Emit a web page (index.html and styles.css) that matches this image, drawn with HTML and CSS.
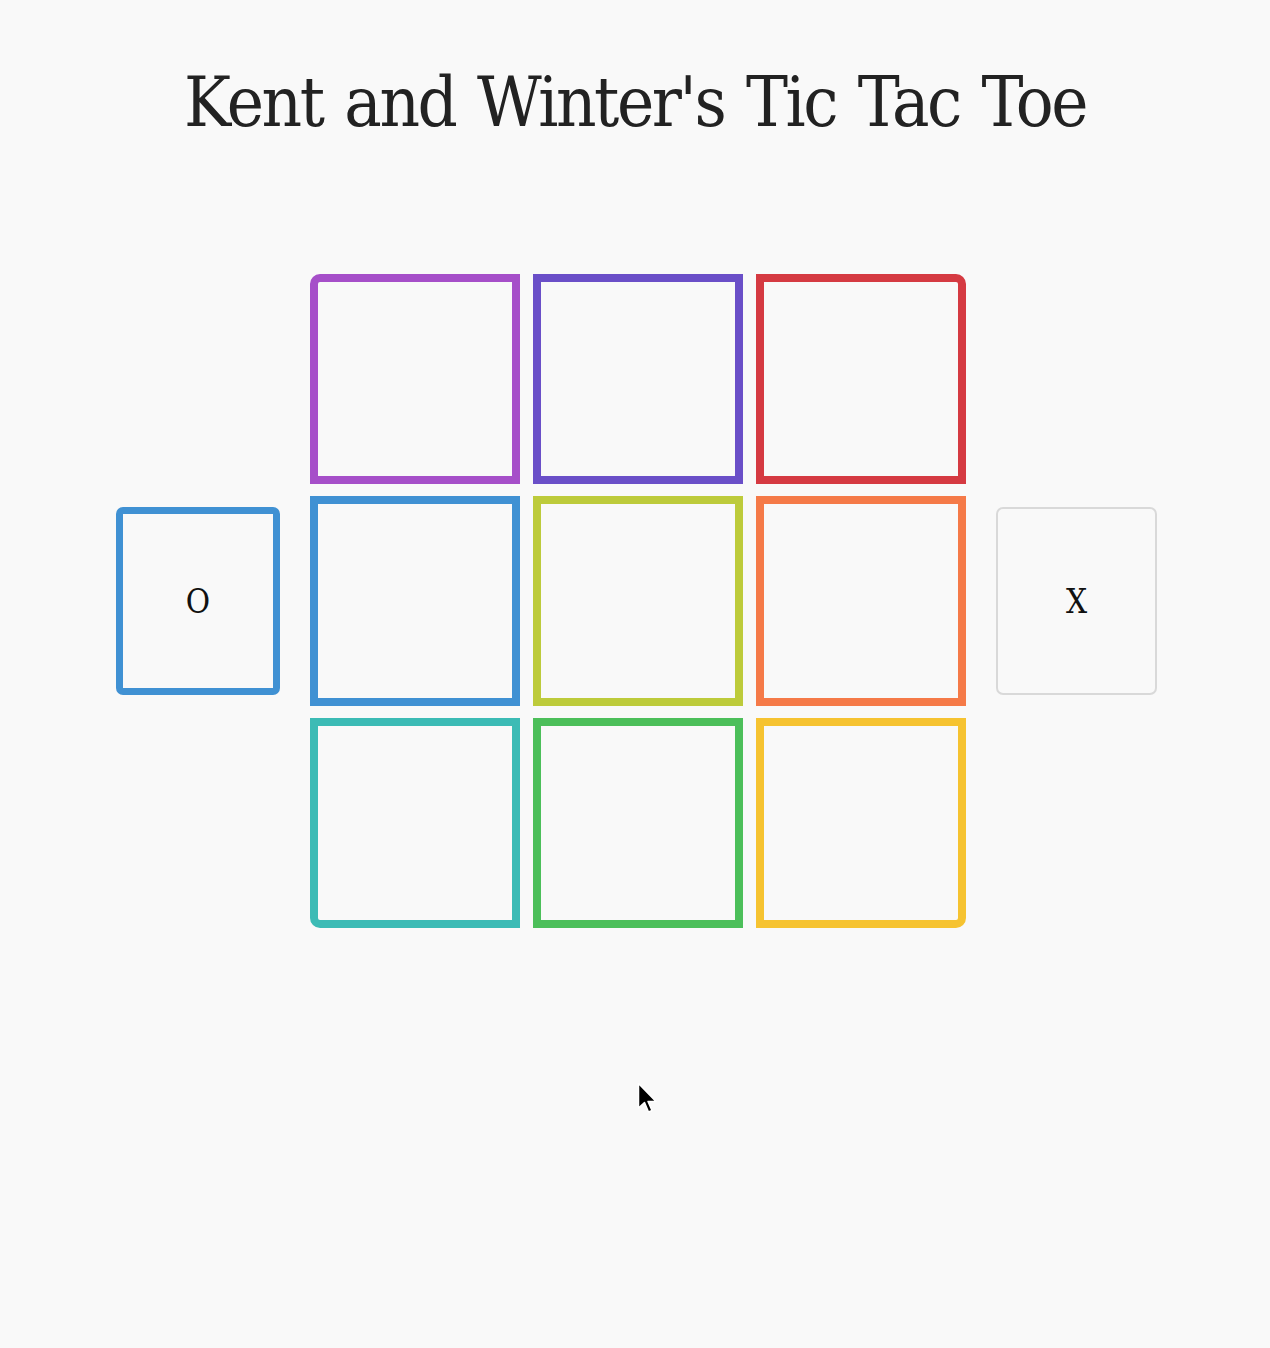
FILE: index.html
```html
<!DOCTYPE html>
<html lang="en">
<head>
<meta charset="utf-8">
<title>Kent and Winter's Tic Tac Toe</title>
<link rel="stylesheet" href="styles.css">
</head>
<body>
<h1 class="title">Kent and Winter's Tic Tac Toe</h1>
<main class="game">
  <div class="player player-o active">O</div>
  <div class="board">
    <div class="cell c1"></div>
    <div class="cell c2"></div>
    <div class="cell c3"></div>
    <div class="cell c4"></div>
    <div class="cell c5"></div>
    <div class="cell c6"></div>
    <div class="cell c7"></div>
    <div class="cell c8"></div>
    <div class="cell c9"></div>
  </div>
  <div class="player player-x">X</div>
</main>
<svg class="cursor" width="22" height="36" viewBox="0 0 22 36">
  <path d="M1.5 1.5 L1.5 26 L7.5 20.5 L11.5 30 L15 28.5 L11 19.5 L19 19.5 Z" fill="#000" stroke="#fff" stroke-width="1.5" stroke-linejoin="round"/>
</svg>
</body>
</html>
```
FILE: styles.css
```css
html, body {
  margin: 0;
  padding: 0;
  background: #f9f9f9;
}
body {
  position: relative;
  min-height: 1348px;
}
.title {
  margin: 0;
  padding-top: 60px;
  text-align: center;
  font-family: "DejaVu Serif Condensed", "DejaVu Serif", serif;
  font-stretch: condensed;
  font-weight: normal;
  font-size: 70px;
  letter-spacing: -2.4px;
  word-spacing: 4px;
  line-height: 84px;
  color: #222;
}
.game {
  display: flex;
  justify-content: center;
  align-items: center;
  gap: 30px;
  margin-top: 130px;
  padding-left: 3px;
}
.board {
  display: grid;
  grid-template-columns: repeat(3, 210px);
  grid-template-rows: repeat(3, 210px);
  column-gap: 13px;
  row-gap: 12px;
}
.cell {
  box-sizing: border-box;
  border: 8px solid #999;
}
.c1 { border-color: #a64fc9; border-top-left-radius: 10px; }
.c2 { border-color: #6a4fc8; }
.c3 { border-color: #d53a42; border-top-right-radius: 10px; }
.c4 { border-color: #4091d3; }
.c5 { border-color: #bdcb3b; }
.c6 { border-color: #f57a48; }
.c7 { border-color: #3cbbb5; border-bottom-left-radius: 10px; }
.c8 { border-color: #4cbf5a; }
.c9 { border-color: #f6c331; border-bottom-right-radius: 10px; }
.player {
  box-sizing: border-box;
  height: 188px;
  display: flex;
  align-items: center;
  justify-content: center;
  font-family: "DejaVu Serif Condensed", "DejaVu Serif", serif;
  font-stretch: condensed;
  font-size: 33px;
  color: #111;
  border-radius: 7px;
}
.player-o {
  width: 164px;
  border: 7px solid #4091d3;
}
.player-x {
  width: 161px;
  border: 2px solid #d9d9d9;
}
.cursor {
  position: absolute;
  left: 637px;
  top: 1082px;
}
```
